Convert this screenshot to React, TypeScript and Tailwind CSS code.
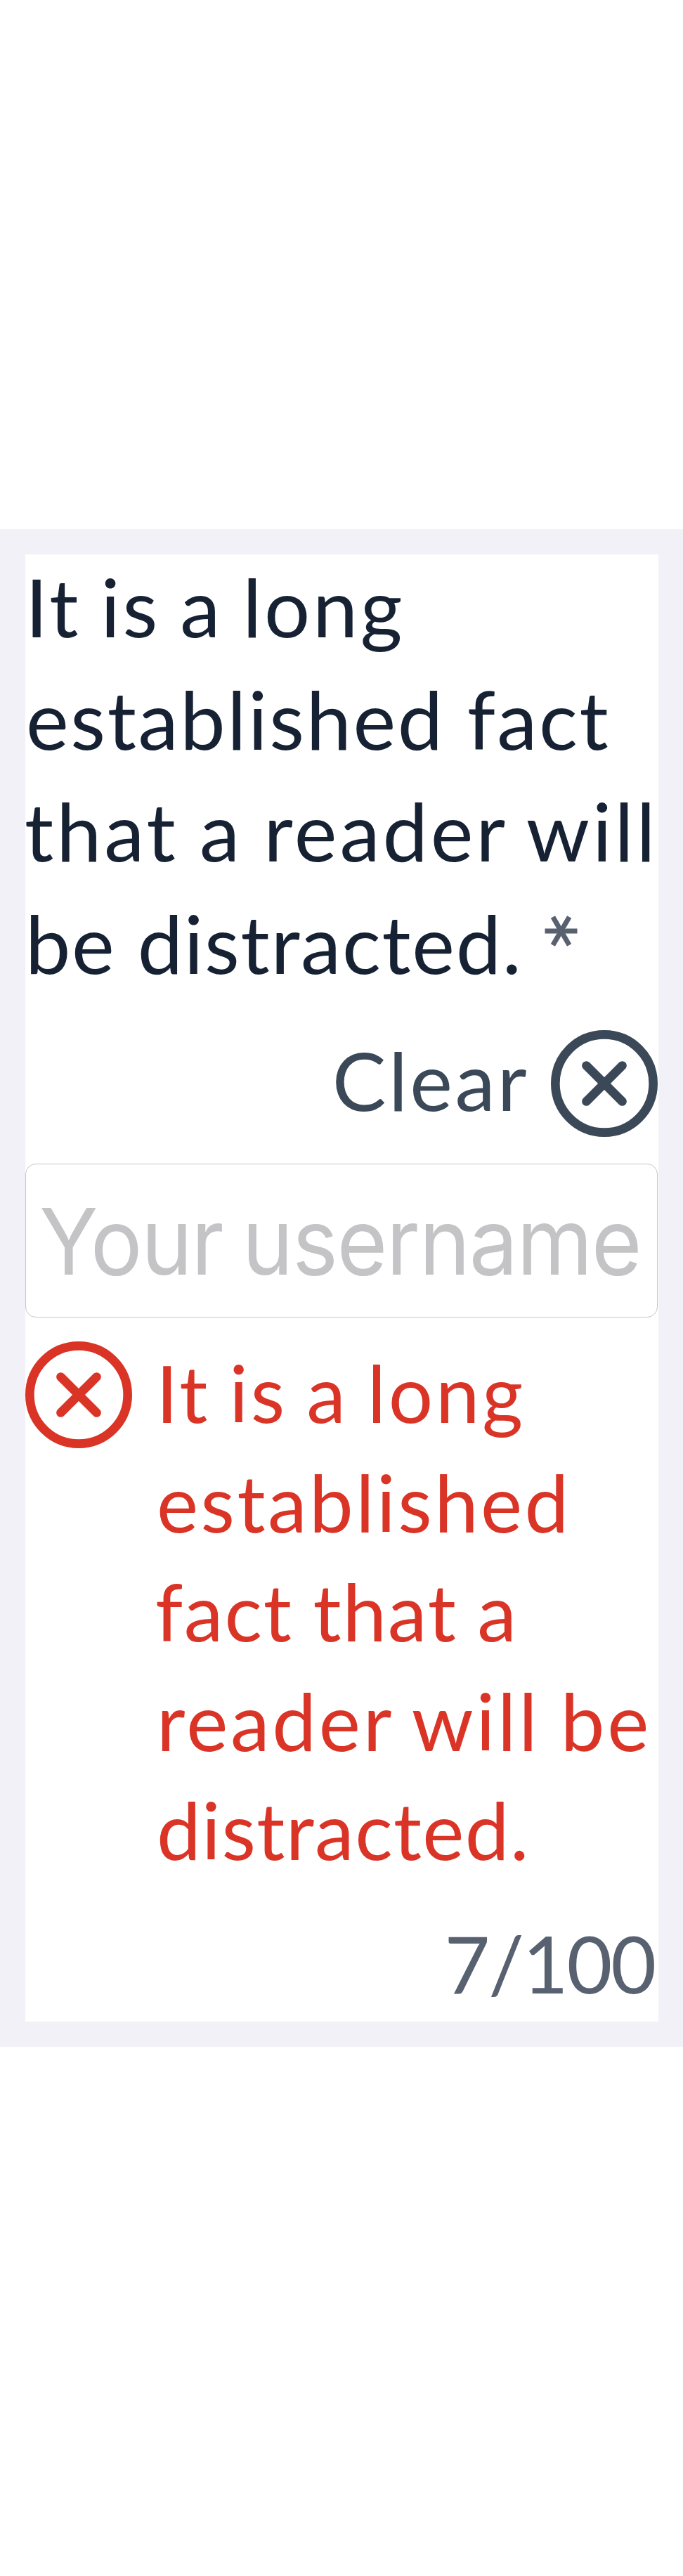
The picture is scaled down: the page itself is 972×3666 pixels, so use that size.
function CircleX({ className }: { className: string }) {
  return (
    <svg viewBox="-12 -12 24 24" fill="none" stroke="currentColor" strokeWidth={2} className={"block h-[152px] w-[152px] shrink-0 " + className}>
      <circle r={11} />
      <path d="M-4.03-4.03 4.03 4.03M4.03-4.03-4.03 4.03" strokeLinecap="round" />
    </svg>
  );
}

export default function App() {
  return (
    <main className="min-h-[3666px] bg-white pt-[753px] font-['Lato',sans-serif] whitespace-nowrap">
      <div className="h-[2160px] bg-[#f2f1f7] pt-9 pr-[35px] pl-9">
        <section className="flow-root h-[2088px] bg-white">
          <h1 className="-mt-[6px] text-[115px] leading-[159.7px] text-[#162233]">
            <span className="block tracking-[3.7px] [word-spacing:-5px]">It is a long</span>
            <span className="ml-px block tracking-[2.6px]">established fact</span>
            <span className="-ml-px block tracking-[3.9px] [word-spacing:-3px]">that a reader will</span>
            <span className="flex h-[160px]">
              <span className="tracking-[1.7px]">be distracted.</span>
              <span className="mt-[13px] ml-[24px] inline-block h-[140px] origin-[50%_50px] -rotate-90 text-[140px] text-[#586170] [-webkit-text-stroke:1px_#586170]">*</span>
            </span>
          </h1>

          <div className="mt-[44px] flex h-[152px] items-center justify-end text-[#3b4857]">
            <span className="mt-[-13px] mr-[31px] text-[115px] leading-[160px] tracking-[3.3px]">Clear</span>
            <CircleX className="mr-px" />
          </div>

          <div className="mt-[38px] mr-px flex h-[219px] items-center overflow-hidden rounded-[15px] border border-[#c6c6c8] pt-[3px] pl-[19px] font-['Inter',sans-serif] text-[131px] text-[#c4c4c6]">
            <span className="origin-left scale-x-[0.94] tracking-[-1.6px] [word-spacing:-6px]">Your username</span>
          </div>

          <div className="mt-[34px] flex gap-[35px] text-[#da3427]">
            <CircleX className="" />
            <p className="-mt-[5px] text-[112px] leading-[155.5px]">
              <span className="-ml-px block tracking-[3.6px] [word-spacing:-5px]">It is a long</span>
              <span className="block tracking-[3.4px]">established</span>
              <span className="-ml-[2px] block tracking-[1.9px] [word-spacing:-2px]">fact that a</span>
              <span className="block tracking-[3.7px] [word-spacing:-3px]">reader will be</span>
              <span className="block tracking-[1.4px]">distracted.</span>
            </p>
          </div>

          <p className="mt-[34px] mr-[5px] text-right text-[112px] leading-[155px] tracking-[-2.2px] text-[#586170]">7/100</p>
        </section>
      </div>
    </main>
  );
}
